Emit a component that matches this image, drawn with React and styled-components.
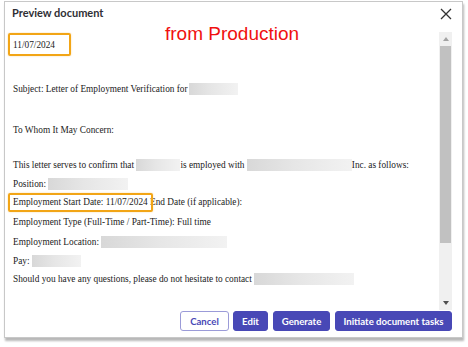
import React from "react";
import styled, { createGlobalStyle } from "styled-components";

const Global = createGlobalStyle`
  html, body { margin: 0; padding: 0; background: #ffffff; }
  body { width: 468px; height: 347px; overflow: hidden; }
`;

const Page = styled.div`
  padding: 1px 5px 0 4px;
  position: relative;
`;

const Dialog = styled.div`
  position: relative;
  width: 459px;
  height: 337px;
  box-sizing: border-box;
  border: 1px solid #c8c8c8;
  background: #fff;
  box-shadow: 1px 3px 2px rgba(0, 0, 0, 0.28);
  display: flex;
  flex-direction: column;
`;

const Header = styled.div`
  height: 28px;
  display: flex;
  align-items: flex-start;
  justify-content: space-between;
  padding: 4px 10px 0 7px;
  box-sizing: border-box;
`;

const Title = styled.div`
  font-family: Lato, "Open Sans", sans-serif;
  font-weight: 700;
  font-size: 11px;
  line-height: 14px;
  color: #2f2f35;
`;

const Close = styled.svg`
  width: 12px;
  height: 12px;
  margin-top: 2px;
`;

const Annotation = styled.div`
  position: absolute;
  left: 160px;
  top: 21px;
  font-family: "Liberation Sans", Arial, sans-serif;
  font-size: 19px;
  color: #f01010;
`;

const Body = styled.div`
  flex: 1;
  display: flex;
  padding: 2px 10px 0 2px;
  min-height: 0;
`;

const Doc = styled.div`
  flex: 1;
  overflow: hidden;
  font-family: "Liberation Serif", "Times New Roman", serif;
  font-size: 9.3px;
  color: #222;
  padding-left: 6px;
`;

const Line = styled.div`
  display: flex;
  align-items: center;
  height: 14px;
  margin-top: ${(p) => p.$gap || 0}px;
  white-space: pre;
`;

const Boxed = styled.span`
  position: relative;
  &::after {
    content: "";
    position: absolute;
    left: -5px;
    right: ${(p) => p.$r}px;
    top: ${(p) => p.$t}px;
    bottom: ${(p) => p.$b}px;
    border: 2px solid #f2a516;
    border-radius: 2px;
    box-shadow: 0 0 2px rgba(242, 165, 22, 0.4);
  }
`;

const Redact = styled.span`
  display: inline-block;
  width: ${(p) => p.$w}px;
  height: 12px;
  margin-left: ${(p) => p.$ml || 0}px;
  background: linear-gradient(90deg, #d8d8d8 0%, #e6e6e6 45%, #f2f2f2 100%);
`;

const Scrollbar = styled.div`
  width: 13px;
  display: flex;
  flex-direction: column;
  background: #f0f0f0;
  margin-bottom: 1px;
`;

const ArrowBtn = styled.div`
  height: 14px;
  display: flex;
  align-items: center;
  justify-content: center;
`;

const Arrow = styled.div`
  width: 0;
  height: 0;
  border-left: 3.5px solid transparent;
  border-right: 3.5px solid transparent;
  ${(p) =>
    p.$up
      ? "border-bottom: 4px solid #a3a3a3;"
      : "border-top: 4px solid #505050;"}
`;

const Thumb = styled.div`
  height: 197px;
  margin: 0 1px;
  background: #c1c1c1;
`;

const Track = styled.div`
  flex: 1;
`;

const Footer = styled.div`
  height: 26px;
  display: flex;
  justify-content: flex-end;
  align-items: flex-start;
  gap: 5px;
  padding-right: 10px;
`;

const Button = styled.button`
  height: 20px;
  width: ${(p) => p.$w}px;
  box-sizing: border-box;
  padding: 0;
  margin-left: ${(p) => p.$ml || 0}px;
  border-radius: 3px;
  font-family: Lato, "Open Sans", sans-serif;
  font-weight: 700;
  font-size: 9.6px;
  cursor: pointer;
  border: 1px solid ${(p) => (p.$outline ? "#9b9bd8" : "#4848b6")};
  background: ${(p) => (p.$outline ? "#ffffff" : "#4848b6")};
  color: ${(p) => (p.$outline ? "#4848b6" : "#ffffff")};
`;

export default function App() {
  return (
    <>
      <Global />
      <Page>
        <Dialog>
          <Header>
            <Title>Preview document</Title>
            <Close viewBox="0 0 12 12">
              <path d="M1 1 L11 11 M11 1 L1 11" stroke="#333" strokeWidth="1.3" fill="none" />
            </Close>
          </Header>
          <Annotation>from Production</Annotation>
          <Body>
            <Doc>
              <Line $gap={6}>
                <Boxed $r={-16} $t={-7} $b={-6}>11/07/2024</Boxed>
              </Line>
              <Line $gap={30}>
                Subject: Letter of Employment Verification for<Redact $w={49} $ml={1} />
              </Line>
              <Line $gap={27}>To Whom It May Concern:</Line>
              <Line $gap={21}>
                This letter serves to confirm that <Redact $w={44} />is employed with <Redact $w={105} />Inc. as follows:
              </Line>
              <Line $gap={5}>
                Position: <Redact $w={80} />
              </Line>
              <Line $gap={4}>
                <Boxed $r={-5} $t={-4} $b={-5}>Employment Start Date: 11/07/2024</Boxed> End Date (if applicable):
              </Line>
              <Line $gap={6}>Employment Type (Full-Time / Part-Time): Full time</Line>
              <Line $gap={6}>
                Employment Location: <Redact $w={126} />
              </Line>
              <Line $gap={5}>
                Pay: <Redact $w={49} />
              </Line>
              <Line $gap={4}>
                Should you have any questions, please do not hesitate to contact <Redact $w={100} />
              </Line>
            </Doc>
            <Scrollbar>
              <ArrowBtn>
                <Arrow $up />
              </ArrowBtn>
              <Thumb />
              <Track />
              <ArrowBtn>
                <Arrow />
              </ArrowBtn>
            </Scrollbar>
          </Body>
          <Footer>
            <Button $outline $w={49}>Cancel</Button>
            <Button $w={35} $ml={-1}>Edit</Button>
            <Button $w={57}>Generate</Button>
            <Button $w={117}>Initiate document tasks</Button>
          </Footer>
        </Dialog>
      </Page>
    </>
  );
}
